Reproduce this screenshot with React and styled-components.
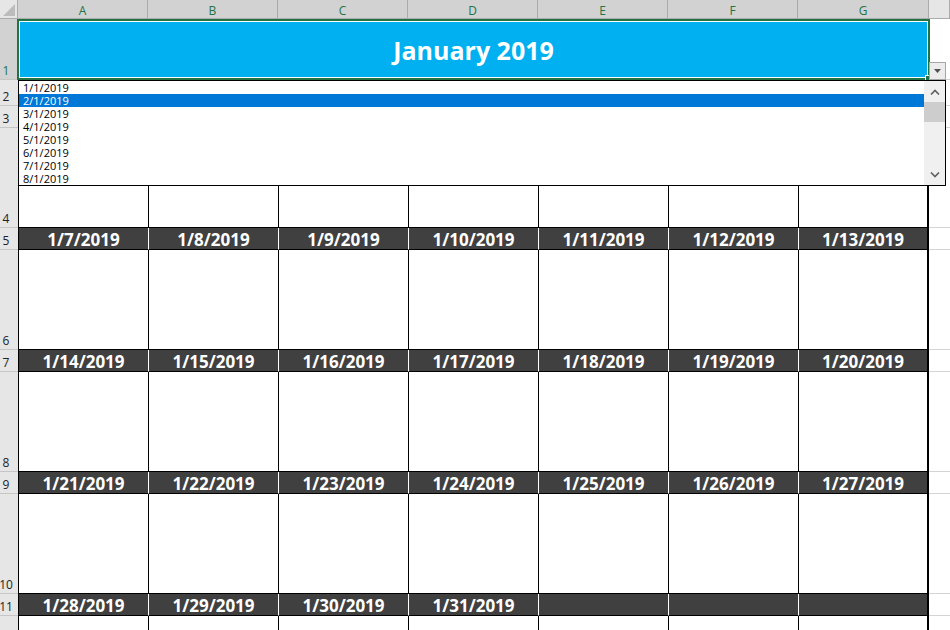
import React from 'react';
import styled, { createGlobalStyle } from 'styled-components';

const GlobalStyle = createGlobalStyle`
    html, body {
        margin: 0;
        padding: 0;
        background: #fff;
        overflow: hidden;
    }
    body {
        font-family: "Open Sans", "Liberation Sans", sans-serif;
    }
`;

const COLUMNS = ['A', 'B', 'C', 'D', 'E', 'F', 'G'];
const WEEKS = [7, 14, 21, 28];
const LIST_ITEMS = ['1/1/2019', '2/1/2019', '3/1/2019', '4/1/2019', '5/1/2019', '6/1/2019', '7/1/2019', '8/1/2019'];

const Sheet = styled.div`
    position: relative;
    width: 950px;
    height: 630px;
    overflow: hidden;
    display: grid;
    grid-template-columns: 18px repeat(6, 130px) 131px 1fr;
    grid-template-rows: 19px 61px 26px 22px repeat(4, 100px 22px) 100px;
`;

const Corner = styled.div`
    background: #e6e6e6;
    border-right: 1px solid #ababab;
    border-bottom: 1px solid #ababab;
    display: flex;
    align-items: flex-end;
    justify-content: flex-end;
    padding: 0 2px 2px 0;
`;

const CornerMark = styled.div`
    width: 0;
    height: 0;
    border-style: solid;
    border-width: 0 0 12px 12px;
    border-color: transparent transparent #bcbcbc transparent;
`;

const ColHeader = styled.div`
    background: ${({ $selected }) => ($selected ? '#d2d2d2' : '#e6e6e6')};
    color: ${({ $selected }) => ($selected ? '#217346' : '#444')};
    border-right: 1px solid #ababab;
    border-bottom: 1px solid #ababab;
    font-size: 12px;
    display: flex;
    align-items: center;
    justify-content: center;
    padding-top: 2px;
`;

const RowHeader = styled.div`
    background: ${({ $selected }) => ($selected ? '#d2d2d2' : '#e6e6e6')};
    color: ${({ $selected }) => ($selected ? '#217346' : '#222')};
    border-bottom: 1px solid #c6c6c6;
    font-size: 12px;
    line-height: 1;
    display: flex;
    align-items: flex-end;
    justify-content: center;
    padding: 0 6px 2px 0;
`;

const TitleCell = styled.div`
    grid-column: 2 / 9;
    position: relative;
    z-index: 1;
    margin: 0 -1px;
    border: 2px solid #217346;
    box-shadow: inset 0 0 0 1px #fff;
    background: #00b0f0;
    color: #fff;
    font-size: 25px;
    font-weight: 700;
    display: flex;
    align-items: center;
    justify-content: center;

    &::after {
        content: '';
        position: absolute;
        right: -4px;
        bottom: -4px;
        width: 5px;
        height: 5px;
        background: #217346;
        border: 1px solid #fff;
    }
`;

const Blank = styled.div`
    border-bottom: 1px solid #d4d4d4;
    border-right: ${({ $edge }) => ($edge ? 'none' : '1px solid #d4d4d4')};
`;

const DayCell = styled.div`
    border-left: 1px solid #000;
    border-bottom: 1px solid #000;
    border-right: ${({ $last }) => ($last ? '2px solid #000' : 'none')};
`;

const DayBar = styled.div`
    background: #404040;
    border-left: 1px solid ${({ $first }) => ($first ? '#000' : '#fff')};
    border-bottom: 1px solid #000;
    border-right: ${({ $last }) => ($last ? '2px solid #000' : 'none')};
    color: #fff;
    font-size: 17px;
    font-weight: 700;
    display: flex;
    align-items: center;
    justify-content: center;
    padding-top: 1px;
`;

const DropButton = styled.div`
    position: absolute;
    left: 929px;
    top: 62px;
    width: 17px;
    height: 18px;
    box-sizing: border-box;
    background: #ececec;
    border: 1px solid #a6a6a6;
    display: flex;
    align-items: center;
    justify-content: center;
    z-index: 2;
`;

const ListBox = styled.div`
    position: absolute;
    left: 18px;
    top: 80px;
    width: 928px;
    height: 106px;
    box-sizing: border-box;
    border: 1px solid #000;
    background: #fff;
    display: flex;
    z-index: 3;
`;

const Items = styled.div`
    flex: 1;
    overflow: hidden;
`;

const Item = styled.div`
    height: 13px;
    line-height: 13px;
    font-size: 11px;
    padding-left: 4px;
    background: ${({ $active }) => ($active ? '#0078d7' : 'transparent')};
    color: ${({ $active }) => ($active ? '#fff' : '#000')};
`;

const ScrollBar = styled.div`
    width: 21px;
    background: #f0f0f0;
    display: flex;
    flex-direction: column;
`;

const ScrollArrow = styled.div`
    height: 21px;
    display: flex;
    align-items: center;
    justify-content: center;
`;

const Thumb = styled.div`
    height: 20px;
    background: #cdcdcd;
`;

const Track = styled.div`
    flex: 1;
`;

const Chevron = ({ up }) => (
    <svg width="10" height="6" viewBox="0 0 10 6">
        <polyline
            points={up ? '1,5.5 5,1.5 9,5.5' : '1,0.5 5,4.5 9,0.5'}
            fill="none"
            stroke="#606060"
            strokeWidth="1.6"
        />
    </svg>
);

const dayLabel = (d) => (d <= 31 ? `1/${d}/2019` : '');

const App = () => (
    <>
        <GlobalStyle />
        <Sheet>
            <Corner>
                <CornerMark />
            </Corner>
            {COLUMNS.map((c) => (
                <ColHeader key={c} $selected>
                    {c}
                </ColHeader>
            ))}
            <ColHeader />

            <RowHeader $selected>1</RowHeader>
            <TitleCell>January 2019</TitleCell>
            <Blank $edge />

            {[2, 3].map((r) => (
                <React.Fragment key={r}>
                    <RowHeader>{r}</RowHeader>
                    {COLUMNS.map((c) => (
                        <Blank key={c} />
                    ))}
                    <Blank $edge />
                </React.Fragment>
            ))}

            {WEEKS.map((start, w) => (
                <React.Fragment key={start}>
                    <RowHeader>{4 + w * 2}</RowHeader>
                    {COLUMNS.map((c, i) => (
                        <DayCell key={c} $last={i === 6} />
                    ))}
                    <Blank $edge />
                    <RowHeader>{5 + w * 2}</RowHeader>
                    {COLUMNS.map((c, i) => (
                        <DayBar key={c} $first={i === 0} $last={i === 6}>
                            {dayLabel(start + i)}
                        </DayBar>
                    ))}
                    <Blank $edge />
                </React.Fragment>
            ))}

            {/* row 12 runs past the bottom edge, so its label is out of view */}
            <RowHeader />
            {COLUMNS.map((c, i) => (
                <DayCell key={c} $last={i === 6} />
            ))}
            <Blank $edge />

            <DropButton>
                <svg width="7" height="4" viewBox="0 0 7 4">
                    <polygon points="0,0 7,0 3.5,4" fill="#505050" />
                </svg>
            </DropButton>

            <ListBox>
                <Items>
                    {LIST_ITEMS.map((item, i) => (
                        <Item key={item} $active={i === 1}>
                            {item}
                        </Item>
                    ))}
                </Items>
                <ScrollBar>
                    <ScrollArrow>
                        <Chevron up />
                    </ScrollArrow>
                    <Thumb />
                    <Track />
                    <ScrollArrow>
                        <Chevron />
                    </ScrollArrow>
                </ScrollBar>
            </ListBox>
        </Sheet>
    </>
);

export default App;
